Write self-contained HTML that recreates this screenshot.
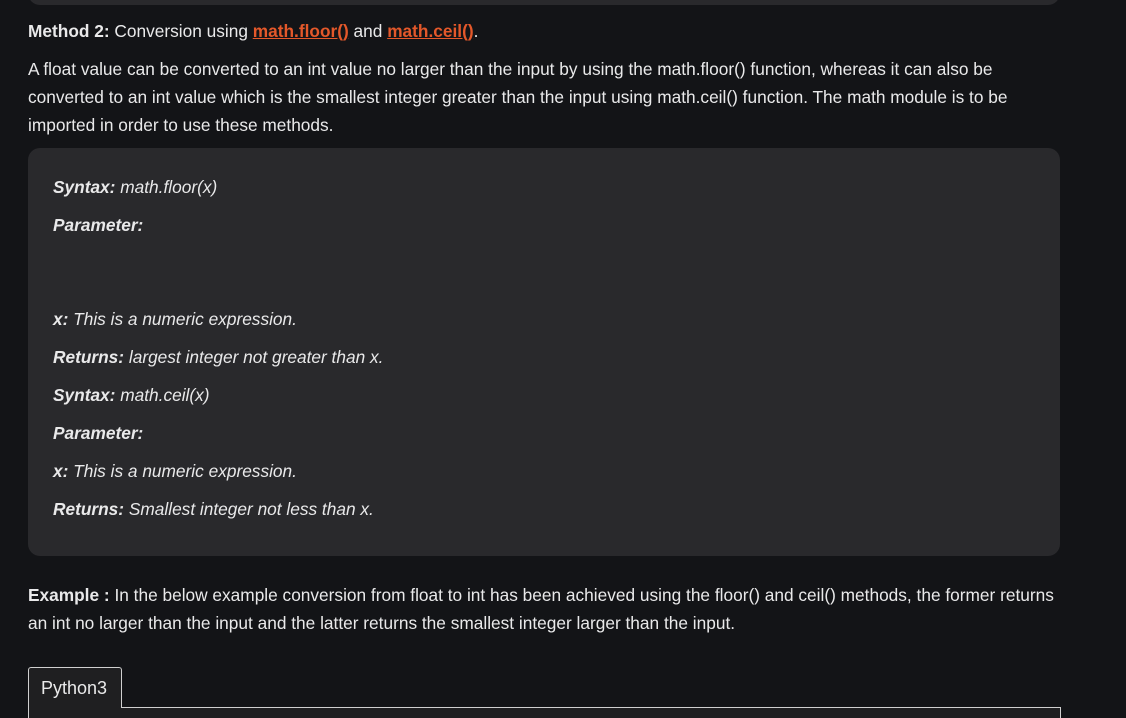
<!DOCTYPE html>
<html><head><style>
html,body{margin:0;background:#131417;width:1126px;height:718px;overflow:hidden}
body{position:relative;font-family:"Liberation Sans",sans-serif;color:#e9e9ea;font-size:17.3px;}
.l{position:absolute;left:28px;white-space:nowrap;letter-spacing:0}
.b{position:absolute;background:#29292c;border-radius:12px}
a{color:#e4582a;text-decoration:underline;font-weight:bold}
i{font-style:italic}
</style></head><body>
<div class="b" style="left:28px;top:-20px;width:1032px;height:25px"></div>
<div class="l" style="top:21px"><b>Method 2:</b> Conversion using <a>math.floor()</a> and <a>math.ceil()</a>.</div>
<div class="l" style="top:59px">A float value can be converted to an int value no larger than the input by using the math.floor() function, whereas it can also be</div>
<div class="l" style="top:87px">converted to an int value which is the smallest integer greater than the input using math.ceil() function. The math module is to be</div>
<div class="l" style="top:115px">imported in order to use these methods.</div>
<div class="b" style="left:28px;top:148px;width:1032px;height:408px"></div>
<div class="l" style="left:53px;top:177px"><i><b>Syntax:</b> math.floor(x)</i></div>
<div class="l" style="left:53px;top:215px"><i><b>Parameter:</b></i></div>
<div class="l" style="left:53px;top:309px"><i><b>x:</b> This is a numeric expression.</i></div>
<div class="l" style="left:53px;top:347px"><i><b>Returns:</b> largest integer not greater than x.</i></div>
<div class="l" style="left:53px;top:385px"><i><b>Syntax:</b> math.ceil(x)</i></div>
<div class="l" style="left:53px;top:423px"><i><b>Parameter:</b></i></div>
<div class="l" style="left:53px;top:461px"><i><b>x:</b> This is a numeric expression.</i></div>
<div class="l" style="left:53px;top:499px"><i><b>Returns:</b> Smallest integer not less than x.</i></div>
<div class="l" style="top:585px"><b>Example :</b> In the below example conversion from float to int has been achieved using the floor() and ceil() methods, the former returns</div>
<div class="l" style="top:613px">an int no larger than the input and the latter returns the smallest integer larger than the input.</div>
<div style="position:absolute;left:28px;top:707px;width:1031px;height:20px;border:1px solid #d0d0d0;background:#1f1f21"></div>
<div style="position:absolute;left:28px;top:667px;width:94px;height:41px;border:1px solid #d0d0d0;border-bottom:none;background:#1f1f21;border-radius:3px 3px 0 0;box-sizing:border-box"></div>
<div class="l" style="left:41px;top:678px;font-size:18px">Python3</div>
</body></html>
